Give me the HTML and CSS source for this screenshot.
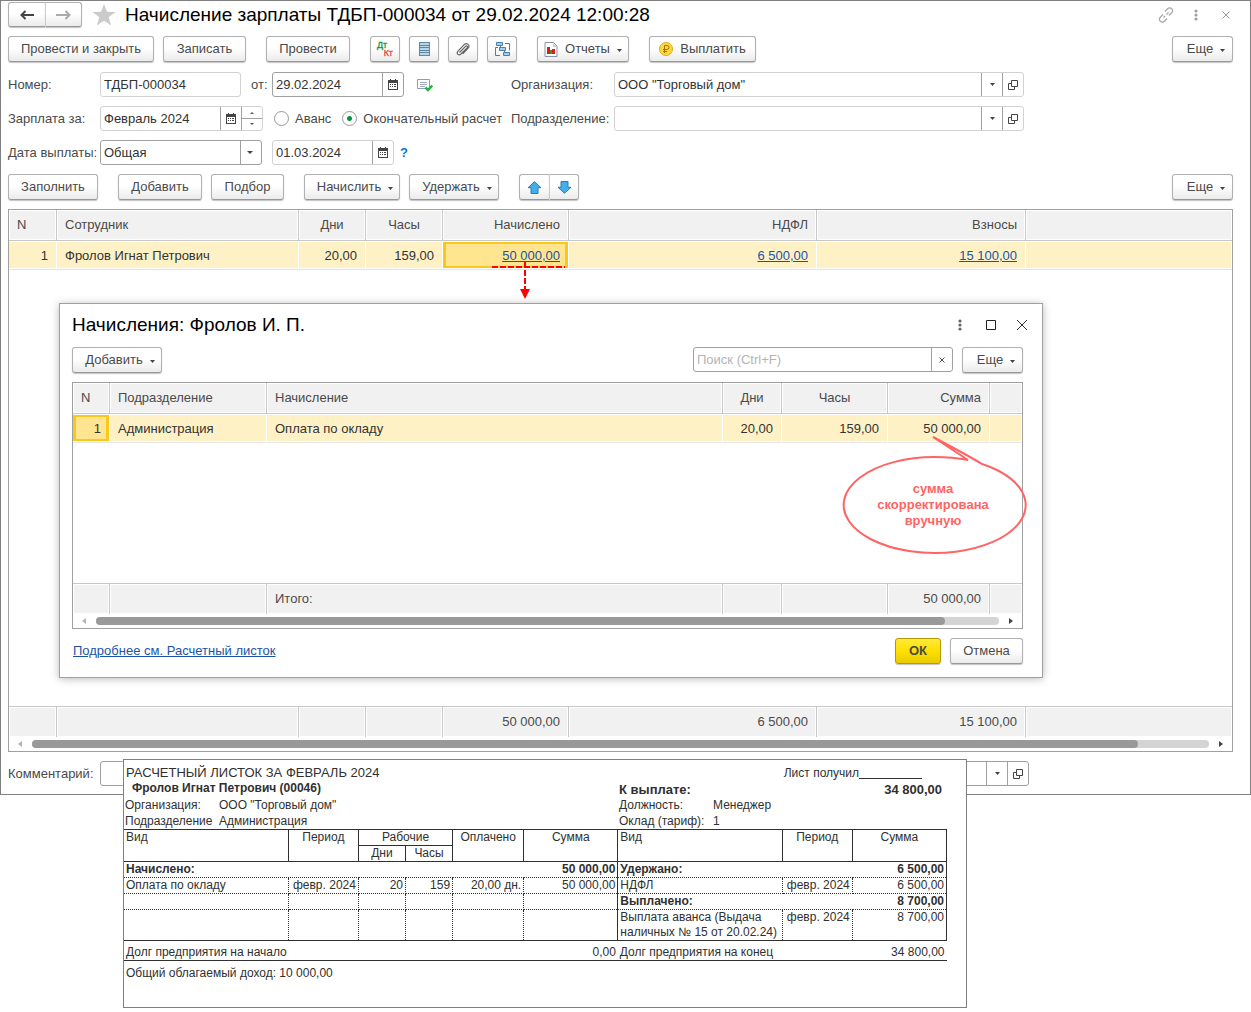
FILE: index.html
```html
<!DOCTYPE html>
<html lang="ru">
<head>
<meta charset="utf-8">
<title>Начисление зарплаты</title>
<link rel="stylesheet" href="styles.css">
</head>
<body>
<svg class="sprite" aria-hidden="true">
  <symbol id="calendar" viewBox="0 0 10 11"><path fill="#444" fill-rule="evenodd" d="M0 1h2V0h1v1h4V0h1v1h2v10H0zM1 4v6h8V4z"/><path fill="#444" d="M2 5h1v1H2zM4 5h1v1H4zM6 5h1v1H6zM2 7h1v1H2zM4 7h1v1H4zM6 7h1v1H6zM7 5h1v1H7zM7 7h1v1H7z"/></symbol>
  <symbol id="caret" viewBox="0 0 5 3"><path fill="#444" d="M0 0h5L2.500 3z"/></symbol>
  <symbol id="open" viewBox="0 0 10 10"><path fill="none" stroke="#444" d="M3.500.5h6v6h-6zM3.500 3.500h-3v6h6v-3"/></symbol>
  <symbol id="dots" viewBox="0 0 4 12"><circle cx="2" cy="2" r="1.600"/><circle cx="2" cy="6" r="1.600"/><circle cx="2" cy="10" r="1.600"/></symbol>
  <symbol id="left" viewBox="0 0 4 6"><path fill="#b4b4b4" d="M4 0v6L0 3z"/></symbol>
  <symbol id="right" viewBox="0 0 4 6"><path fill="#444" d="M0 0v6l4-3z"/></symbol>
</svg>

<main class="window">
  <header class="titlebar">
    <div class="pair">
      <button class="btn" aria-label="Назад"><svg width="15" height="10" viewBox="0 0 15 10"><path d="M1 5h13M5.500 1L1.500 5l4 4" fill="none" stroke="#444" stroke-width="2"/></svg></button>
      <button class="btn" aria-label="Вперед"><svg width="15" height="10" viewBox="0 0 15 10"><path d="M0 5h13M9.500 1l4 4-4 4" fill="none" stroke="#aaa" stroke-width="2"/></svg></button>
    </div>
    <svg class="star" width="24" height="22" viewBox="0 0 24 22"><path fill="#c9cbcd" d="M12 0l3 7.800 8.500.3-6.800 5.200 2.500 8.300-7.200-4.900-7.200 4.900 2.500-8.300L.5 8.100 9 7.800z"/></svg>
    <h1>Начисление зарплаты ТДБП-000034 от 29.02.2024 12:00:28</h1>
    <div class="window-icons">
      <button class="plain" aria-label="Ссылка"><svg width="16" height="16" viewBox="0 0 16 16"><path fill="none" stroke="#a8a8a8" stroke-width="1.300" d="M7 4.500l2.500-2.700a2.700 2.700 0 0 1 4.200 0 2.700 2.700 0 0 1 0 4L11 8.500M9 11.500l-2.500 2.700a2.700 2.700 0 0 1-4.200 0 2.700 2.700 0 0 1 0-4L5 7.500M5.500 10.500l1.500-1.500M8.500 7.500l2-2"/></svg></button>
      <button class="plain" aria-label="Меню"><svg width="4" height="12" fill="#a0a0a0"><use href="#dots"/></svg></button>
      <button class="plain" aria-label="Закрыть"><svg width="8" height="8" viewBox="0 0 8 8"><path d="M.5.5l7 7M7.500.5l-7 7" stroke="#999"/></svg></button>
    </div>
  </header>

  <div class="toolbar">
    <div class="group">
      <button class="btn btn-post-close">Провести и закрыть</button>
      <button class="btn btn-write">Записать</button>
    </div>
    <div class="group"><button class="btn btn-medium">Провести</button></div>
    <div class="group">
      <button class="btn btn-icon" aria-label="Дт Кт"><span class="dtkt"><span>Дт</span><span>Кт</span></span></button>
      <button class="btn btn-icon" aria-label="Список"><svg width="11" height="14" viewBox="0 0 11 14"><path fill="#5d88aa" d="M0 0h11v14H0z"/><path fill="#b9d5e8" d="M1 1h9v2H1zM1 4h9v1H1zM1 6h9v2H1zM1 9h9v1H1zM1 11h9v2H1z"/></svg></button>
      <button class="btn btn-icon" aria-label="Файлы"><svg width="14" height="15" viewBox="0 0 14 15"><path fill="none" stroke="#666" stroke-width="1.200" d="M3.500 10.500l6-6.200c1.200-1.200 2.600.2 1.500 1.500l-6 6.200c-2.300 2.200-5-.4-3-2.800l6.200-6.500c2.700-2.700 6.300.7 3.900 3.500l-5.300 5.600"/></svg></button>
      <button class="btn btn-icon" aria-label="Структура"><svg width="15" height="15" viewBox="0 0 15 15"><path fill="none" stroke="#4b7fa8" d="M3 5.500H.5v8H5M10 1.500h4.500v7M5.500 3v3M9.500 8v3"/><path fill="#a9cce4" stroke="#4b7fa8" d="M1.500.5h6v3h-6zM4.500 5.500h6v3h-6zM8.500 10.500h6v3h-6z"/></svg></button>
    </div>
    <div class="group"><button class="btn btn-reports"><svg width="14" height="15" viewBox="0 0 14 15"><path fill="#fff" stroke="#8795a3" d="M1 .5h8.500L13 4v10.500H1z"/><path fill="#c7d0d8" d="M9 1v4h4z"/><path fill="#e01b1b" d="M3 5h3v7H3z"/><path fill="#2b9b3c" d="M6 8h2v4H6z"/><path fill="#e01b1b" d="M8 7h3v5H8z"/></svg><span>Отчеты</span><svg class="caret" width="5" height="3"><use href="#caret"/></svg></button></div>
    <div class="group"><button class="btn btn-pay"><svg width="14" height="14" viewBox="0 0 14 14"><circle cx="7" cy="7" r="6.500" fill="#ffd83d" stroke="#e0a81c"/><path d="M5.500 11V3.500H8a2 2 0 0 1 0 4H4M4 9.500h4" fill="none" stroke="#a87400"/></svg><span>Выплатить</span></button></div>
    <button class="btn btn-more">Еще<svg class="caret" width="5" height="3"><use href="#caret"/></svg></button>
  </div>

  <form class="form">
    <div class="row">
      <div class="row-left">
        <label class="label" for="number">Номер:</label>
        <div class="field f-number"><input id="number" value="ТДБП-000034"></div>
        <label class="label-from" for="date">от:</label>
        <div class="field f-date strong"><input id="date" value="29.02.2024"><button type="button" aria-label="Календарь"><svg width="10" height="11"><use href="#calendar"/></svg></button></div>
        <svg class="posted" width="16" height="13" viewBox="0 0 16 13"><path fill="#fff" stroke="#8c9db5" d="M.5.5h12v9H.5z"/><path stroke="#9aa8bd" d="M3 3.500h7M3 5.500h7M3 7.500h5"/><path fill="none" stroke="#22b33a" stroke-width="2.500" d="M8.500 8.500l2.500 2.500 4.300-4.500"/></svg>
      </div>
      <label class="label-right" for="org">Организация:</label>
      <div class="field f-org"><input id="org" value='ООО "Торговый дом"'><button type="button" aria-label="Выбрать"><svg width="5" height="3"><use href="#caret"/></svg></button><button type="button" aria-label="Открыть"><svg width="10" height="10"><use href="#open"/></svg></button></div>
    </div>
    <div class="row">
      <div class="row-left">
        <label class="label" for="month">Зарплата за:</label>
        <div class="field f-month"><input id="month" value="Февраль 2024"><button type="button" aria-label="Календарь"><svg width="10" height="11"><use href="#calendar"/></svg></button><button type="button" class="spin" aria-label="Изменить месяц"><svg width="20" height="23" viewBox="0 0 20 23"><path d="M0 11.500h20" stroke="#a0a0a0"/><path fill="#555" d="M8 7h4l-2-2zM8 16h4l-2 2z"/></svg></button></div>
        <label class="radio"><input type="radio" name="kind">Аванс</label>
        <label class="radio"><input type="radio" name="kind" checked>Окончательный расчет</label>
      </div>
      <label class="label-right" for="dept">Подразделение:</label>
      <div class="field f-org"><input id="dept"><button type="button" aria-label="Выбрать"><svg width="5" height="3"><use href="#caret"/></svg></button><button type="button" aria-label="Открыть"><svg width="10" height="10"><use href="#open"/></svg></button></div>
    </div>
    <div class="row">
      <label class="label" for="paykind">Дата выплаты:</label>
      <div class="field f-select strong"><select id="paykind"><option>Общая</option></select></div>
      <div class="field f-paydate"><input aria-label="Дата" value="01.03.2024"><button type="button" aria-label="Календарь"><svg width="10" height="11"><use href="#calendar"/></svg></button></div>
      <a class="help" href="#help">?</a>
    </div>
  </form>

  <div class="toolbar">
    <div class="group"><button class="btn btn-fill">Заполнить</button></div>
    <div class="group">
      <button class="btn btn-medium">Добавить</button>
      <button class="btn btn-pick">Подбор</button>
    </div>
    <div class="group">
      <button class="btn btn-accrue btn-menu">Начислить<svg class="caret" width="5" height="3"><use href="#caret"/></svg></button>
      <button class="btn btn-fill btn-menu">Удержать<svg class="caret" width="5" height="3"><use href="#caret"/></svg></button>
    </div>
    <div class="pair pair-small">
      <button class="btn" aria-label="Вверх"><svg width="15" height="13" viewBox="0 0 15 13"><path fill="#42aeea" stroke="#2e7db0" d="M7.500.7l6.500 6h-3v5.800H4V6.700H1z"/></svg></button>
      <button class="btn" aria-label="Вниз"><svg width="15" height="13" viewBox="0 0 15 13"><path fill="#42aeea" stroke="#2e7db0" d="M7.500 12.300l6.500-6h-3V.5H4v5.800H1z"/></svg></button>
    </div>
    <button class="btn btn-more">Еще<svg class="caret" width="5" height="3"><use href="#caret"/></svg></button>
  </div>

  <section class="grid">
    <table>
      <colgroup><col class="m-n"><col class="m-name"><col class="m-days"><col class="m-hours"><col class="m-accrued"><col class="m-tax"><col class="m-fees"><col></colgroup>
      <thead><tr><th>N</th><th>Сотрудник</th><th class="center">Дни</th><th class="center">Часы</th><th class="num">Начислено</th><th class="num">НДФЛ</th><th class="num">Взносы</th><th></th></tr></thead>
      <tbody>
        <tr class="current"><td class="num">1</td><td>Фролов Игнат Петрович</td><td class="num">20,00</td><td class="num">159,00</td><td class="num selected"><a href="#accrued">50 000,00</a><svg class="pointer" width="75" height="40" viewBox="0 0 75 40"><path fill="none" stroke="#f00" stroke-width="2" stroke-dasharray="6 2" d="M0 6h73"/><path fill="none" stroke="#f00" stroke-width="2" stroke-dasharray="6 2" d="M33 1v28"/><path fill="#f00" d="M28 28h10l-5 10z"/></svg></td><td class="num"><a href="#tax">6 500,00</a></td><td class="num"><a href="#fees">15 100,00</a></td><td></td></tr>
        <tr class="filler main-filler"><td colspan="8"></td></tr>
      </tbody>
      <tfoot><tr><td></td><td></td><td></td><td></td><td class="num">50 000,00</td><td class="num">6 500,00</td><td class="num">15 100,00</td><td></td></tr></tfoot>
    </table>
    <div class="scroll"><svg width="4" height="6"><use href="#left"/></svg><div class="track"><div class="thumb"></div></div><svg width="4" height="6"><use href="#right"/></svg></div>
  </section>

  <div class="row comment">
    <label class="label" for="comment">Комментарий:</label>
    <div class="field f-comment strong"><input id="comment"><button type="button" aria-label="Выбрать"><svg width="5" height="3"><use href="#caret"/></svg></button><button type="button" aria-label="Открыть"><svg width="10" height="10"><use href="#open"/></svg></button></div>
  </div>

  <section class="dialog" role="dialog" aria-labelledby="dialog-title">
    <header class="dialog-title">
      <h2 id="dialog-title">Начисления: Фролов И. П.</h2>
      <div class="window-icons dialog-icons">
        <button class="plain" aria-label="Меню"><svg width="4" height="12" fill="#666"><use href="#dots"/></svg></button>
        <button class="plain" aria-label="Развернуть"><svg width="10" height="10" viewBox="0 0 10 10"><path fill="none" stroke="#222" d="M.5.5h9v9h-9z"/></svg></button>
        <button class="plain" aria-label="Закрыть"><svg width="10" height="10" viewBox="0 0 10 10"><path d="M0 0l10 10M10 0L0 10" stroke="#333"/></svg></button>
      </div>
    </header>
    <div class="toolbar dialog-toolbar">
      <button class="btn btn-fill btn-menu">Добавить<svg class="caret" width="5" height="3"><use href="#caret"/></svg></button>
      <div class="field f-search strong"><input placeholder="Поиск (Ctrl+F)" aria-label="Поиск"><button type="button" aria-label="Очистить"><svg width="6" height="6" viewBox="0 0 6 6"><path d="M.5.5l5 5M5.500.5l-5 5" stroke="#555"/></svg></button></div>
      <button class="btn btn-more">Еще<svg class="caret" width="5" height="3"><use href="#caret"/></svg></button>
    </div>
    <div class="grid">
      <table>
        <colgroup><col class="d-n"><col class="d-dept"><col><col class="d-days"><col class="d-hours"><col class="d-sum"><col class="d-rest"></colgroup>
        <thead><tr><th>N</th><th>Подразделение</th><th>Начисление</th><th class="center">Дни</th><th class="center">Часы</th><th class="num">Сумма</th><th></th></tr></thead>
        <tbody>
          <tr class="current"><td class="num selected">1</td><td>Администрация</td><td>Оплата по окладу</td><td class="num">20,00</td><td class="num">159,00</td><td class="num">50 000,00</td><td></td></tr>
          <tr class="filler dialog-filler"><td colspan="7"></td></tr>
        </tbody>
        <tfoot><tr><td></td><td></td><td>Итого:</td><td></td><td></td><td class="num">50 000,00</td><td></td></tr></tfoot>
      </table>
      <div class="scroll"><svg width="4" height="6"><use href="#left"/></svg><div class="track"><div class="thumb"></div></div><svg width="4" height="6"><use href="#right"/></svg></div>
    </div>
    <footer class="dialog-footer">
      <a href="#payslip">Подробнее см. Расчетный листок</a>
      <button class="btn btn-ok">ОК</button>
      <button class="btn btn-pick">Отмена</button>
    </footer>
    <div class="callout">
      <svg width="188" height="120" viewBox="0 0 188 120"><path fill="none" stroke="#ff6464" stroke-width="2" stroke-linejoin="miter" d="M141 28A91 48 0 1 1 93 21Q112 21 127 24L92 1Q128 20 141 28z"/></svg>
      <p>сумма<br>скорректирована<br>вручную</p>
    </div>
  </section>
</main>

<article class="payslip" id="payslip">
  <div class="slip-head">
    <div>РАСЧЕТНЫЙ ЛИСТОК ЗА ФЕВРАЛЬ 2024</div>
    <div class="slip-sign"><span>Лист получил</span><i></i></div>
  </div>
  <div class="slip-info">
    <b class="slip-name">Фролов Игнат Петрович (00046)</b>
    <b class="slip-pay">К выплате:</b><b class="slip-pay slip-total">34 800,00</b>
    <span>Организация:</span><span>ООО "Торговый дом"</span><span>Должность:</span><span>Менеджер</span>
    <span>Подразделение</span><span>Администрация</span><span>Оклад (тариф):</span><span>1</span>
  </div>
  <table>
    <colgroup><col class="s-kind"><col class="s-period"><col class="s-unit"><col class="s-unit"><col class="s-paid"><col class="s-sum"><col class="s-kind"><col class="s-period"><col class="s-sum"></colgroup>
    <thead>
      <tr><th rowspan="2" class="start">Вид</th><th rowspan="2">Период</th><th colspan="2">Рабочие</th><th rowspan="2">Оплачено</th><th rowspan="2">Сумма</th><th rowspan="2" class="start">Вид</th><th rowspan="2">Период</th><th rowspan="2">Сумма</th></tr>
      <tr><th>Дни</th><th>Часы</th></tr>
    </thead>
    <tbody>
      <tr class="bold"><td colspan="5">Начислено:</td><td class="end solid">50 000,00</td><td colspan="2">Удержано:</td><td class="end solid">6 500,00</td></tr>
      <tr class="cells"><td>Оплата по окладу</td><td class="end">февр. 2024</td><td class="end">20</td><td class="end">159</td><td class="end">20,00 дн.</td><td class="end solid">50 000,00</td><td>НДФЛ</td><td class="end">февр. 2024</td><td class="end solid">6 500,00</td></tr>
      <tr class="cells"><td></td><td></td><td></td><td></td><td></td><td class="solid"></td><td colspan="2" class="bold open">Выплачено:</td><td class="bold end solid">8 700,00</td></tr>
      <tr class="cells last"><td></td><td></td><td></td><td></td><td></td><td class="solid"></td><td>Выплата аванса (Выдача<br>наличных № 15 от 20.02.24)</td><td class="end">февр. 2024</td><td class="end solid">8 700,00</td></tr>
    </tbody>
    <tfoot><tr><td colspan="5">Долг предприятия на начало</td><td class="end">0,00</td><td colspan="2">Долг предприятия на конец</td><td class="end">34 800,00</td></tr></tfoot>
  </table>
  <p class="income">Общий облагаемый доход: 10 000,00</p>
</article>
</body>
</html>
```

FILE: styles.css
```css
* { box-sizing: border-box; }
body {
  margin: 0;
  padding-bottom: 4px;
  background: #fff;
  color: #4a4a4a;
  font: 13px/16px "Liberation Sans", Arial, sans-serif;
}
button, input, select { font: inherit; color: inherit; margin: 0; }
svg { display: block; flex: none; }
h1, h2, p { margin: 0; }
a { color: #1a54a6; }
.sprite { position: absolute; width: 0; height: 0; }

.window {
  position: relative;
  border: 1px solid #808080;
  padding: 1px 17px 8px 7px;
}

/* Title bar */
.titlebar { display: flex; align-items: center; height: 25px; }
h1, h2 { color: #000; font-size: 19px; font-weight: 400; line-height: 24px; white-space: nowrap; }
.star { margin: 0 9px 0 10px; }
.window-icons { display: flex; align-items: center; margin-left: auto; }
.plain {
  display: flex; align-items: center; justify-content: center;
  width: 30px; height: 20px; padding: 0; border: 0; background: none;
}
.titlebar .window-icons { margin-right: -8px; }

/* Buttons */
.btn {
  display: flex; align-items: center; justify-content: center; gap: 7px;
  height: 26px; padding: 0; white-space: nowrap;
  border: 1px solid #b0b0b0; border-bottom-color: #989898; border-radius: 3px;
  background: linear-gradient(#fff 45%, #ebebeb);
  box-shadow: 0 1px 1px #c4c4c4;
}
.caret { position: relative; top: 1px; }
.btn-more { width: 61px; margin-left: auto; padding-left: 7px; }
.btn-menu { padding-left: 6px; }
.btn-post-close { width: 146px; }
.btn-write { width: 83px; }
.btn-medium { width: 84px; }
.btn-icon { width: 30px; }
.btn-reports { width: 92px; }
.btn-pay { width: 107px; }
.btn-fill { width: 90px; }
.btn-pick { width: 73px; }
.btn-accrue { width: 96px; }
.btn-ok {
  width: 46px; font-weight: 700; border-color: #b39b00;
  background: linear-gradient(#ffe93a, #ffe000 50%, #e8cb00);
}
.pair { display: flex; }
.pair .btn { width: 37px; height: 25px; }
.pair .btn:first-child { border-right: 0; border-radius: 3px 0 0 3px; }
.pair .btn:last-child { border-left-color: #ccc; border-radius: 0 3px 3px 0; }
.pair-small .btn { width: 30px; height: 26px; }
.dtkt { display: grid; width: 16px; font-size: 9px; line-height: 8px; color: #0a9646; text-align: left; -webkit-text-stroke: 0.3px; }
.dtkt span + span { color: #e04848; text-align: right; }

.toolbar { display: flex; gap: 20px; margin-top: 9px; }
.group { display: flex; gap: 9px; }

/* Form */
.form { display: grid; gap: 9px; margin-top: 10px; }
.row { display: flex; align-items: center; height: 25px; }
.row-left { display: flex; align-items: center; flex: none; width: 503px; }
.label { flex: none; width: 92px; white-space: nowrap; }
.label-from { width: 31px; padding-left: 10px; }
.label-right { flex: none; width: 103px; }
.field {
  display: flex; height: 25px; overflow: hidden;
  border: 1px solid #d2d2d2; border-radius: 3px; background: #fff; color: #333;
}
.field.strong { border-color: #a0a0a0; }
.field input, .field select {
  flex: 1; min-width: 0; padding: 0 3px; border: 0; background: none; outline: 0;
}
.field input::placeholder { color: #b4b4b4; opacity: 1; }
.field button {
  display: flex; align-items: center; justify-content: center;
  flex: none; width: 21px; padding: 0; border: 0; border-left: 1px solid #a0a0a0; background: none;
}
.f-number { width: 141px; }
.f-date { width: 132px; }
.f-month { width: 163px; }
.f-select { position: relative; width: 162px; margin-right: 10px; }
.f-select select { appearance: none; }
.f-select::before { content: ""; position: absolute; top: 0; right: 20px; height: 100%; border-left: 1px solid #a0a0a0; }
.f-select::after { content: ""; position: absolute; top: 10px; right: 8px; border: 3px solid transparent; border-top-color: #444; border-bottom: 0; }
.f-paydate { width: 122px; }
.f-org { flex: 0 1 410px; }
.f-comment { flex: 0 1 929px; }
.f-search { width: 260px; margin-left: auto; }
.posted { margin: 2px 0 0 13px; }
.help { margin-left: 6px; color: #0a78c8; font-weight: 700; text-decoration: none; }
.radio { display: flex; align-items: center; gap: 6px; margin-left: 11px; white-space: nowrap; }
.radio input {
  appearance: none; width: 15px; height: 15px;
  border: 1px solid #999; border-radius: 50%; background: #fff;
}
.radio input:checked { background: radial-gradient(#00963c 2px, #fff 3px); }

/* Data grids */
.grid { margin-top: 9px; border: 1px solid #a0a0a0; background: #fff; }
.grid table { width: 100%; table-layout: fixed; border-collapse: separate; border-spacing: 0; }
.grid th, .grid td {
  height: 29px; padding: 0 8px; text-align: left; font-weight: 400; white-space: nowrap;
}
.grid .num { text-align: right; }
.grid .center { text-align: center; }
.grid th, .grid tfoot td {
  height: 31px; background: #f1f1f1; border-right: 1px solid #c8c8c8; box-shadow: inset 0 0 0 1px #fff;
}
.grid th { border-bottom: 1px solid #c8c8c8; }
.grid tfoot td { border-top: 1px solid #c8c8c8; }
.grid th:last-child, .grid td:last-child { border-right: 0; }
.grid .current td {
  padding-top: 2px;
  color: #333; background: #fef1c6; border-right: 1px solid #fff; border-bottom: 1px solid #e4e4e4;
  box-shadow: inset 0 1px #fff, inset 0 -1px #fff;
}
.grid .current .selected {
  position: relative; background: #ffe58f; box-shadow: inset 0 1px #fff, inset 0 -1px #fff, inset 0 0 0 3px #fac71e;
}
.grid .filler td { border: 0; padding: 0; }
.grid .main-filler td { height: 436px; }
.grid .dialog-filler td { height: 140px; }
.m-n { width: 48px; }
.m-name { width: 242px; }
.m-days { width: 67px; }
.m-hours { width: 77px; }
.m-accrued { width: 126px; }
.m-tax { width: 248px; }
.m-fees { width: 209px; }
.d-n { width: 37px; }
.d-dept { width: 157px; }
.d-days { width: 59px; }
.d-hours { width: 106px; }
.d-sum { width: 102px; }
.d-rest { width: 32px; }
.scroll { display: flex; align-items: center; gap: 10px; height: 14px; padding: 0 9px; }
.track { flex: 1; height: 8px; border-radius: 4px; background: #d4d4d4; }
.thumb { width: 94%; height: 8px; border-radius: 4px; background: #999; }
.pointer { position: absolute; top: 20px; left: 49px; z-index: 1; }

.comment { margin-top: 9px; }

/* Dialog over the document window */
.dialog {
  position: absolute; top: 302px; left: 58px; right: 207px;
  padding: 8px 19px 13px 12px;
  border: 1px solid #a0a0a0; background: #fff; box-shadow: 0 1px 8px #bbb;
}
.dialog-title { display: flex; align-items: center; height: 26px; }
.dialog-icons { margin-right: -14px; }
.dialog-icons .plain { width: 31px; }
.dialog-toolbar { gap: 9px; }
.dialog-toolbar .btn-more { margin-left: 0; }
.dialog-footer { display: flex; align-items: center; gap: 9px; margin-top: 9px; }
.dialog-footer a { margin: 0 auto 0 1px; }
.callout { position: absolute; top: 132px; right: 13px; width: 188px; color: #ff6464; }
.callout p { position: absolute; top: 45px; width: 184px; text-align: center; font-weight: 700; }

/* Printed payslip, overlapping the bottom edge of the window */
.payslip {
  position: relative; width: 844px; margin: -36px 0 0 123px; padding: 5px 20px 26px 0;
  border: 1px solid #808080; background: #fff; color: #303030; font-size: 12px;
}
.slip-head { display: flex; justify-content: space-between; padding: 0 24px 0 2px; font-size: 13px; }
.slip-sign { display: flex; font-size: 12px; }
.slip-sign i { width: 63px; height: 14px; border-bottom: 1px solid #303030; }
.slip-info { display: grid; grid-template-columns: 94px 400px 94px 1fr; grid-auto-rows: 16px; padding-left: 1px; }
.slip-name { grid-column: span 2; padding-left: 7px; line-height: 14px; }
.slip-pay { font-size: 13px; line-height: 18px; }
.slip-total { padding-right: 4px; text-align: right; }
.payslip table { width: 823px; table-layout: fixed; border-collapse: collapse; }
.payslip th, .payslip td { height: 16px; padding: 0 2px; line-height: 15px; white-space: nowrap; vertical-align: top; text-align: left; }
.payslip th { border: 1px solid #303030; font-weight: 400; text-align: center; }
.payslip th:first-child { border-left: 0; }
.payslip thead tr + tr th:first-child { border-left: 1px solid #303030; }
.payslip .start { text-align: left; }
.payslip .end { text-align: right; }
.payslip tbody td { border-bottom: 1px dotted #303030; }
.payslip .cells td { border-right: 1px dotted #303030; }
.payslip .cells .open { border-right: 0; }
.payslip td.solid, .payslip .cells td.solid { border-right: 1px solid #303030; }
.payslip .last td { height: 31px; border-bottom: 1px solid #303030; }
.bold { font-weight: 700; }
.payslip tfoot td { height: 20px; vertical-align: bottom; border-bottom: 1px solid #303030; }
.s-kind { width: 164px; }
.s-period { width: 70px; }
.s-unit { width: 47px; }
.s-paid { width: 71px; }
.s-sum { width: 94px; }
.income { padding: 4px 2px 0; }
```
